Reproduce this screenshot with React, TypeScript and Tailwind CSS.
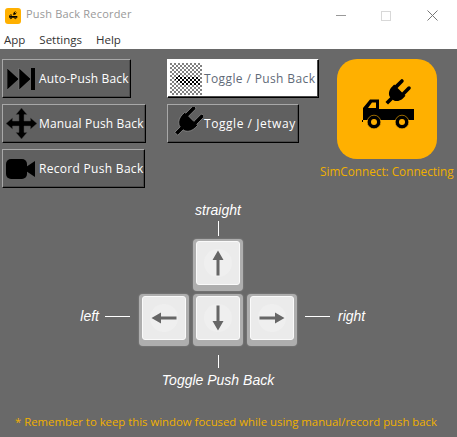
const sans = "font-['Open_Sans','Noto_Sans',sans-serif]";

function Btn({ w, active, icon, label, track }: { w: string; active?: boolean; icon: React.ReactNode; label: string; track: string }) {
  return (
    <div
      className={`${w} h-[39px] flex items-center border border-t-[#a8a8a8] border-l-[#a8a8a8] border-r-black border-b-black shadow-[inset_0_-1px_0_#4a4a4a,inset_-1px_0_0_#4a4a4a] ${
        active ? "bg-white text-[#5f6a78] border-t-white border-l-white" : "bg-[#606060] text-white"
      }`}
    >
      <span className="w-[36px] h-[37px] shrink-0 flex items-center justify-center">{icon}</span>
      <span className={`text-[12px] ${track} whitespace-nowrap pt-[1px]`}>{label}</span>
    </div>
  );
}

function PlugShape({ cx, cy, k, fill, stroke }: { cx: number; cy: number; k: number; fill: string; stroke?: string }) {
  return (
    <g transform={`translate(${cx} ${cy}) rotate(45) scale(${k})`} fill={fill} stroke={stroke} strokeWidth={stroke ? 0.8 / k : 0}>
      <path d="M-6.800 -12 a1.800 1.800 0 0 1 3.600 0 V-4 H3.200 V-12 a1.800 1.800 0 0 1 3.600 0 V-4 H8 V-1 C8 4 5 7.500 1.800 7.800 V14.500 H-1.800 V7.800 C-5 7.500 -8 4 -8 -1 V-4 H-6.800 Z" />
    </g>
  );
}

function Plug() {
  return (
    <svg width="34" height="34" viewBox="0 0 34 34">
      <PlugShape cx={19} cy={15} k={1.15} fill="#000" stroke="#8a8a8a" />
    </svg>
  );
}

function Skip() {
  return (
    <svg width="28" height="22" viewBox="0 0 28 22">
      <path d="M0 0 L12 11 L0 22 Z M12 0 L24 11 L12 22 Z" fill="#000" stroke="#888" strokeWidth="0.5" />
      <rect x="24" y="0" width="4" height="22" fill="#000" />
    </svg>
  );
}

function Move() {
  return (
    <svg width="31" height="31" viewBox="0 0 31 31">
      <path
        d="M15.500 0 L21 6.500 H18 V13 H24.500 V10 L31 15.500 L24.500 21 V18 H18 V24.500 H21 L15.500 31 L10 24.500 H13 V18 H6.500 V21 L0 15.500 L6.500 10 V13 H13 V6.500 H10 Z"
        fill="#000"
        stroke="#444"
        strokeWidth="0.5"
      />
    </svg>
  );
}

function Camera() {
  return (
    <svg width="30" height="20" viewBox="0 0 30 20">
      <rect x="0" y="0" width="21" height="20" rx="5" fill="#000" />
      <path d="M20 8 L29 2 V18 L20 12 Z" fill="#000" />
    </svg>
  );
}

function Dither() {
  return (
    <svg width="32" height="32" viewBox="0 0 32 32" shapeRendering="crispEdges">
      <defs>
        <pattern id="chk" width="4" height="4" patternUnits="userSpaceOnUse">
          <rect width="4" height="4" fill="#fff" />
          <rect width="2" height="2" fill="#808080" />
          <rect x="2" y="2" width="2" height="2" fill="#808080" />
        </pattern>
        <pattern id="chk2" width="4" height="4" patternUnits="userSpaceOnUse">
          <rect width="4" height="4" fill="#fff" />
          <rect width="2" height="2" fill="#000" />
          <rect x="2" y="2" width="2" height="2" fill="#000" />
        </pattern>
      </defs>
      <rect width="32" height="32" fill="url(#chk)" />
      <path d="M4 16 L10 12 H12 V14 H30 V22 H10 V20 H8 Z" fill="url(#chk2)" />
    </svg>
  );
}

function Truck({ size }: { size: number }) {
  return (
    <svg width={size} height={size} viewBox="0 0 100 100">
      <g transform="translate(23 11)">
        <PlugShape cx={37} cy={23} k={1} fill="#000" />
        <path d="M2 52 H3 V38 L10 29.500 H19 V39 H54 V50 H2 Z" fill="#000" />
        <path d="M8 38 L12 32.500 H16 V38 Z" fill="#ffb000" />
        <circle cx="14" cy="52" r="6.800" fill="#000" stroke="#ffb000" strokeWidth="0.6" />
        <circle cx="14" cy="52" r="3" fill="#ffb000" />
        <circle cx="42" cy="52" r="6.800" fill="#000" stroke="#ffb000" strokeWidth="0.6" />
        <circle cx="42" cy="52" r="3" fill="#ffb000" />
      </g>
    </svg>
  );
}

function Key({ dir }: { dir: "up" | "down" | "left" | "right" }) {
  const rot = { up: 0, right: 90, down: 180, left: 270 }[dir];
  return (
    <div className="w-[50px] h-[52px] rounded-[4px] bg-[#aeaeae] pt-[2px] px-[3px] pb-[6px] shadow-[0_0_2px_#8f8f8f]">
      <div className="w-full h-full rounded-[3px] bg-[#ebebeb] border border-[#fafafa] flex items-center justify-center">
        <div className="w-[28px] h-[28px] rounded-full bg-[#efefef] flex items-center justify-center">
          <svg width="26" height="26" viewBox="0 0 26 26" style={{ transform: `rotate(${rot}deg)` }}>
            <path d="M13 0.500 L18.500 10 H14.500 V25.500 H11.500 V10 H7.500 Z" fill="#666" />
          </svg>
        </div>
      </div>
    </div>
  );
}

const Cap = ({ children }: { children: React.ReactNode }) => (
  <span className="italic text-white text-[14px] leading-[18px] font-['Liberation_Sans',sans-serif] whitespace-nowrap">{children}</span>
);

export default function App() {
  return (
    <div className={`w-[457px] h-[437px] flex flex-col overflow-hidden bg-[#696969] ${sans}`}>
      <header className="h-[31px] bg-white flex items-center pl-[5px]">
        <div className="w-[16px] h-[16px] rounded-[3px] bg-[#ffb000] flex items-center justify-center overflow-hidden">
          <Truck size={26} />
        </div>
        <span className="ml-[5px] text-[11px] text-[#999] tracking-[0.2px] pb-[2px]">Push Back Recorder</span>
        <div className="ml-auto flex items-center text-[#8a8a8a]">
          <span className="w-[10px] h-px bg-[#999] mr-[35px]" />
          <span className="w-[10px] h-[10px] border border-[#d8d8d8] mr-[36px]" />
          <svg width="11" height="11" viewBox="0 0 11 11" className="mr-[19px]">
            <path d="M0.500 0.500 L10.500 10.500 M10.500 0.500 L0.500 10.500" stroke="#777" strokeWidth="1" />
          </svg>
        </div>
      </header>
      <nav className="h-[18px] bg-white flex items-center pl-[4px] text-[11.5px] text-[#333] gap-[14px]">
        <span>App</span>
        <span>Settings</span>
        <span>Help</span>
      </nav>

      <main className="flex px-[2px] pt-[10px]">
        <div className="w-[165px] flex flex-col gap-[6px]">
          <Btn w="w-[129px]" track="tracking-[0.15px]" icon={<Skip />} label="Auto-Push Back" />
          <Btn w="w-[144px]" track="tracking-[0.15px]" icon={<Move />} label="Manual Push Back" />
          <Btn w="w-[143px]" track="tracking-[0.3px]" icon={<Camera />} label="Record Push Back" />
        </div>
        <div className="w-[170px] flex flex-col gap-[6px]">
          <Btn w="w-[152px]" track="tracking-[0.38px]" active icon={<Dither />} label="Toggle / Push Back" />
          <Btn w="w-[132px]" track="tracking-[0.55px]" icon={<Plug />} label="Toggle / Jetway" />
        </div>
        <div className="w-[118px] flex flex-col items-start">
          <div className="w-[100px] h-[100px] rounded-[20px] bg-[#ffb000] flex items-center justify-center">
            <Truck size={100} />
          </div>
          <span className="mt-[4px] -ml-[17px] text-[11.75px] text-[#f0b000] whitespace-nowrap">SimConnect: Connecting</span>
        </div>
      </main>

      <section className="w-[436px] flex flex-col items-center mt-[13px]">
        <Cap>straight</Cap>
        <span className="w-px h-[15px] mt-[2px] mb-[3px] bg-white" />
        <Key dir="up" />
        <div className="mt-[3px] w-full grid grid-cols-[1fr_158px_1fr] items-center">
          <div className="flex items-center justify-end gap-[6px] pr-[9px] pb-[8px]">
            <Cap>left</Cap>
            <span className="w-[25px] h-px bg-white" />
          </div>
          <div className="flex gap-[4px]">
            <Key dir="left" />
            <Key dir="down" />
            <Key dir="right" />
          </div>
          <div className="flex items-center gap-[8px] pl-[8px] pb-[8px]">
            <span className="w-[25px] h-px bg-white" />
            <Cap>right</Cap>
          </div>
        </div>
        <span className="w-px h-[13px] mt-[9px] mb-[3px] bg-white" />
        <Cap>Toggle Push Back</Cap>
      </section>

      <p className="mt-[24px] pl-[15px] text-[11.35px] text-[#f0b000] whitespace-nowrap">
        * Remember to keep this window focused while using manual/record push back
      </p>
    </div>
  );
}
